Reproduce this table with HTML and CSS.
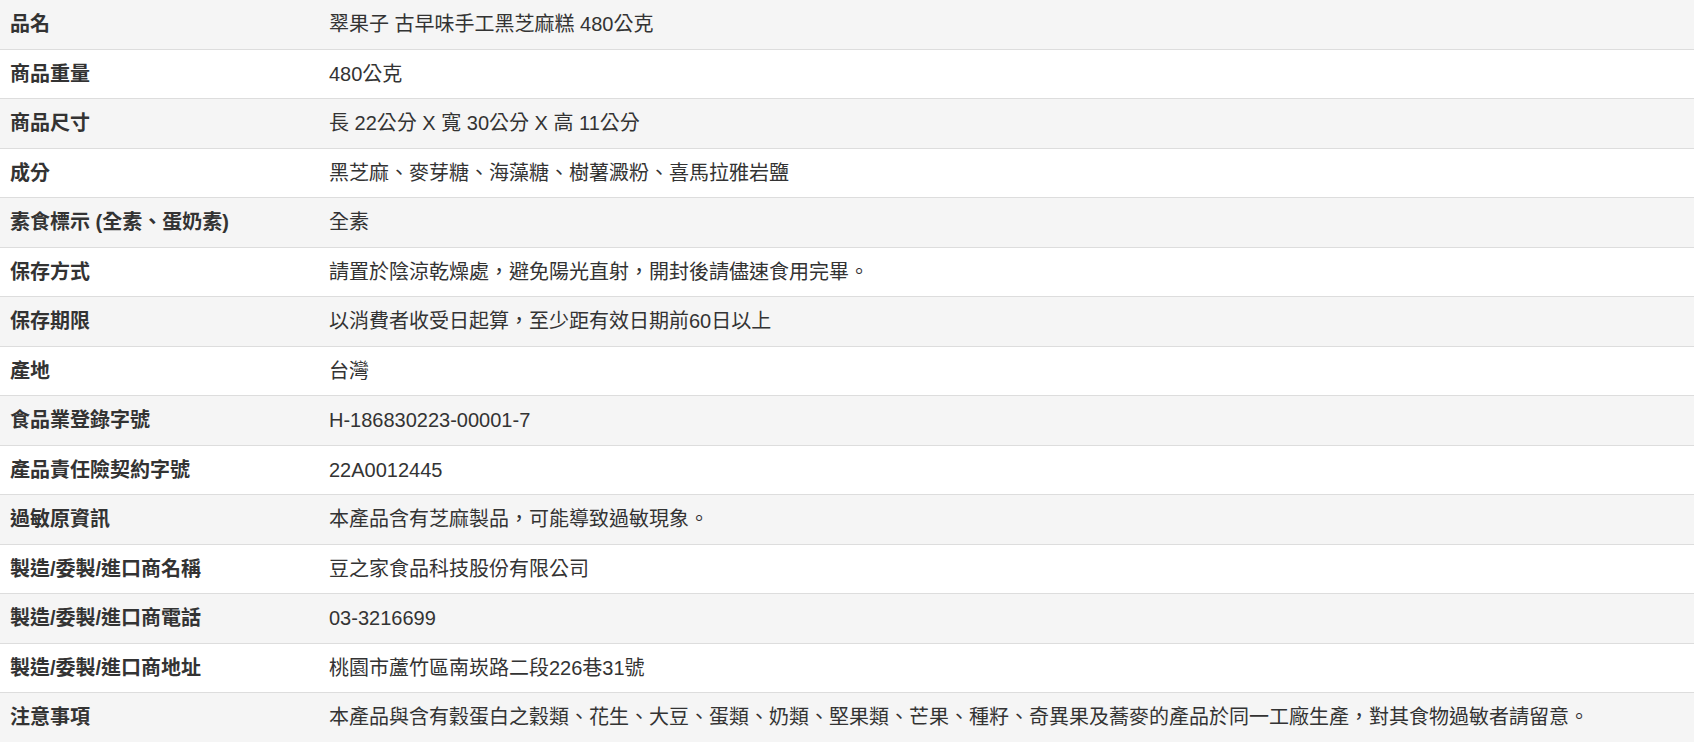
FILE: index.html
```html
<!DOCTYPE html>
<html lang="zh-Hant">
<head>
    <meta charset="UTF-8">
    <meta name="viewport" content="width=device-width, initial-scale=1.0">
    <title>商品規格</title>
    <link rel="stylesheet" href="styles.css">
</head>
<body>
    <div class="spec-wrap">
        <table class="spec-table">
            <colgroup>
                <col class="col-label">
                <col>
            </colgroup>
            <tbody>
                <tr><th>品名</th><td>翠果子 古早味手工黑芝麻糕 480公克</td></tr>
                <tr><th>商品重量</th><td>480公克</td></tr>
                <tr><th>商品尺寸</th><td>長 22公分 X 寬 30公分 X 高 11公分</td></tr>
                <tr><th>成分</th><td>黑芝麻、麥芽糖、海藻糖、樹薯澱粉、喜馬拉雅岩鹽</td></tr>
                <tr><th>素食標示 (全素、蛋奶素)</th><td>全素</td></tr>
                <tr><th>保存方式</th><td>請置於陰涼乾燥處，避免陽光直射，開封後請儘速食用完畢。</td></tr>
                <tr><th>保存期限</th><td>以消費者收受日起算，至少距有效日期前60日以上</td></tr>
                <tr><th>產地</th><td>台灣</td></tr>
                <tr><th>食品業登錄字號</th><td>H-186830223-00001-7</td></tr>
                <tr><th>產品責任險契約字號</th><td>22A0012445</td></tr>
                <tr><th>過敏原資訊</th><td>本產品含有芝麻製品，可能導致過敏現象。</td></tr>
                <tr><th>製造/委製/進口商名稱</th><td>豆之家食品科技股份有限公司</td></tr>
                <tr><th>製造/委製/進口商電話</th><td>03-3216699</td></tr>
                <tr><th>製造/委製/進口商地址</th><td>桃園市蘆竹區南崁路二段226巷31號</td></tr>
                <tr><th>注意事項</th><td>本產品與含有穀蛋白之穀類、花生、大豆、蛋類、奶類、堅果類、芒果、種籽、奇異果及蕎麥的產品於同一工廠生產，對其食物過敏者請留意。</td></tr>
            </tbody>
        </table>
    </div>
</body>
</html>
```

FILE: styles.css
```css
body {
    margin: 0;
    font-family: "Liberation Sans", "Noto Sans CJK TC", sans-serif;
    font-size: 20px;
    color: #333;
    background: #fff;
}
.spec-wrap {
    margin-right: 1px;
}
.spec-table {
    width: 100%;
    border-collapse: collapse;
    table-layout: fixed;
}
.col-label {
    width: 319px;
}
.spec-table th,
.spec-table td {
    padding: 10px;
    line-height: 28.5px;
    text-align: left;
    vertical-align: top;
    border-top: 1px solid #ddd;
    white-space: nowrap;
}
.spec-table th {
    font-weight: bold;
}
.spec-table td {
    font-weight: normal;
}
.spec-table tr:first-child th,
.spec-table tr:first-child td {
    border-top: none;
}
.spec-table tr:nth-child(odd) {
    background-color: #f5f5f5;
}
```
